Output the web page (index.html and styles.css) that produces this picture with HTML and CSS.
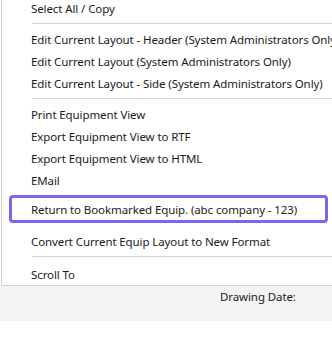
FILE: index.html
```html
<!DOCTYPE html>
<html lang="en">
<head>
    <meta charset="UTF-8">
    <meta name="viewport" content="width=device-width, initial-scale=1.0">
    <title>Equipment Menu</title>
    <link rel="stylesheet" href="styles.css">
</head>
<body>
    <div class="context-menu">
        <div class="item">Select All / Copy</div>
        <div class="separator"></div>
        <div class="item">Edit Current Layout - Header (System Administrators Only)</div>
        <div class="item">Edit Current Layout (System Administrators Only)</div>
        <div class="item">Edit Current Layout - Side (System Administrators Only)</div>
        <div class="separator"></div>
        <div class="item">Print Equipment View</div>
        <div class="item">Export Equipment View to RTF</div>
        <div class="item">Export Equipment View to HTML</div>
        <div class="item">EMail</div>
        <div class="item highlighted">Return to Bookmarked Equip. (abc company - 123)</div>
        <div class="item after-highlight">Convert Current Equip Layout to New Format</div>
        <div class="separator"></div>
        <div class="item last">Scroll To</div>
    </div>
    <div class="details-panel">
        <span class="tick"></span>
        <span class="label">Drawing Date:</span>
    </div>
</body>
</html>
```

FILE: styles.css
```css
body {
    font-family: "Noto Sans", "Open Sans", sans-serif;
    font-size: 11.5px;
    letter-spacing: -0.1px;
    color: #1a1a1a;
    background-color: #fff;
    margin: 0;
    padding: 0;
    overflow: hidden;
}

.context-menu {
    width: 360px;
    margin-top: -2px;
    margin-left: 1px;
    padding-bottom: 1px;
    background: #fff;
    border-left: 1px solid #cfcfcf;
    border-bottom: 1px solid #cfcfcf;
    position: relative;
    z-index: 1;
}

.item {
    height: 22px;
    line-height: 22px;
    padding-left: 29px;
    white-space: nowrap;
}

.item.last {
    line-height: 25px;
}

.separator {
    height: 1px;
    background: #d4d4d4;
    margin: 3px 0 5px 30px;
}

.highlighted {
    width: 319px;
    height: 28px;
    line-height: 24px;
    box-sizing: border-box;
    margin: 3px 0 0 7px;
    padding-left: 19px;
    border: 3px solid #7b66f0;
    border-radius: 4px;
}

.after-highlight {
    margin-top: 8px;
}

.details-panel {
    height: 35px;
    background: #f3f3f3;
    position: relative;
}

.details-panel .label {
    display: block;
    padding-left: 220px;
    line-height: 22px;
}

.details-panel .tick {
    position: absolute;
    left: 259px;
    top: -2px;
    width: 3px;
    height: 2px;
    background: #333;
}
```
